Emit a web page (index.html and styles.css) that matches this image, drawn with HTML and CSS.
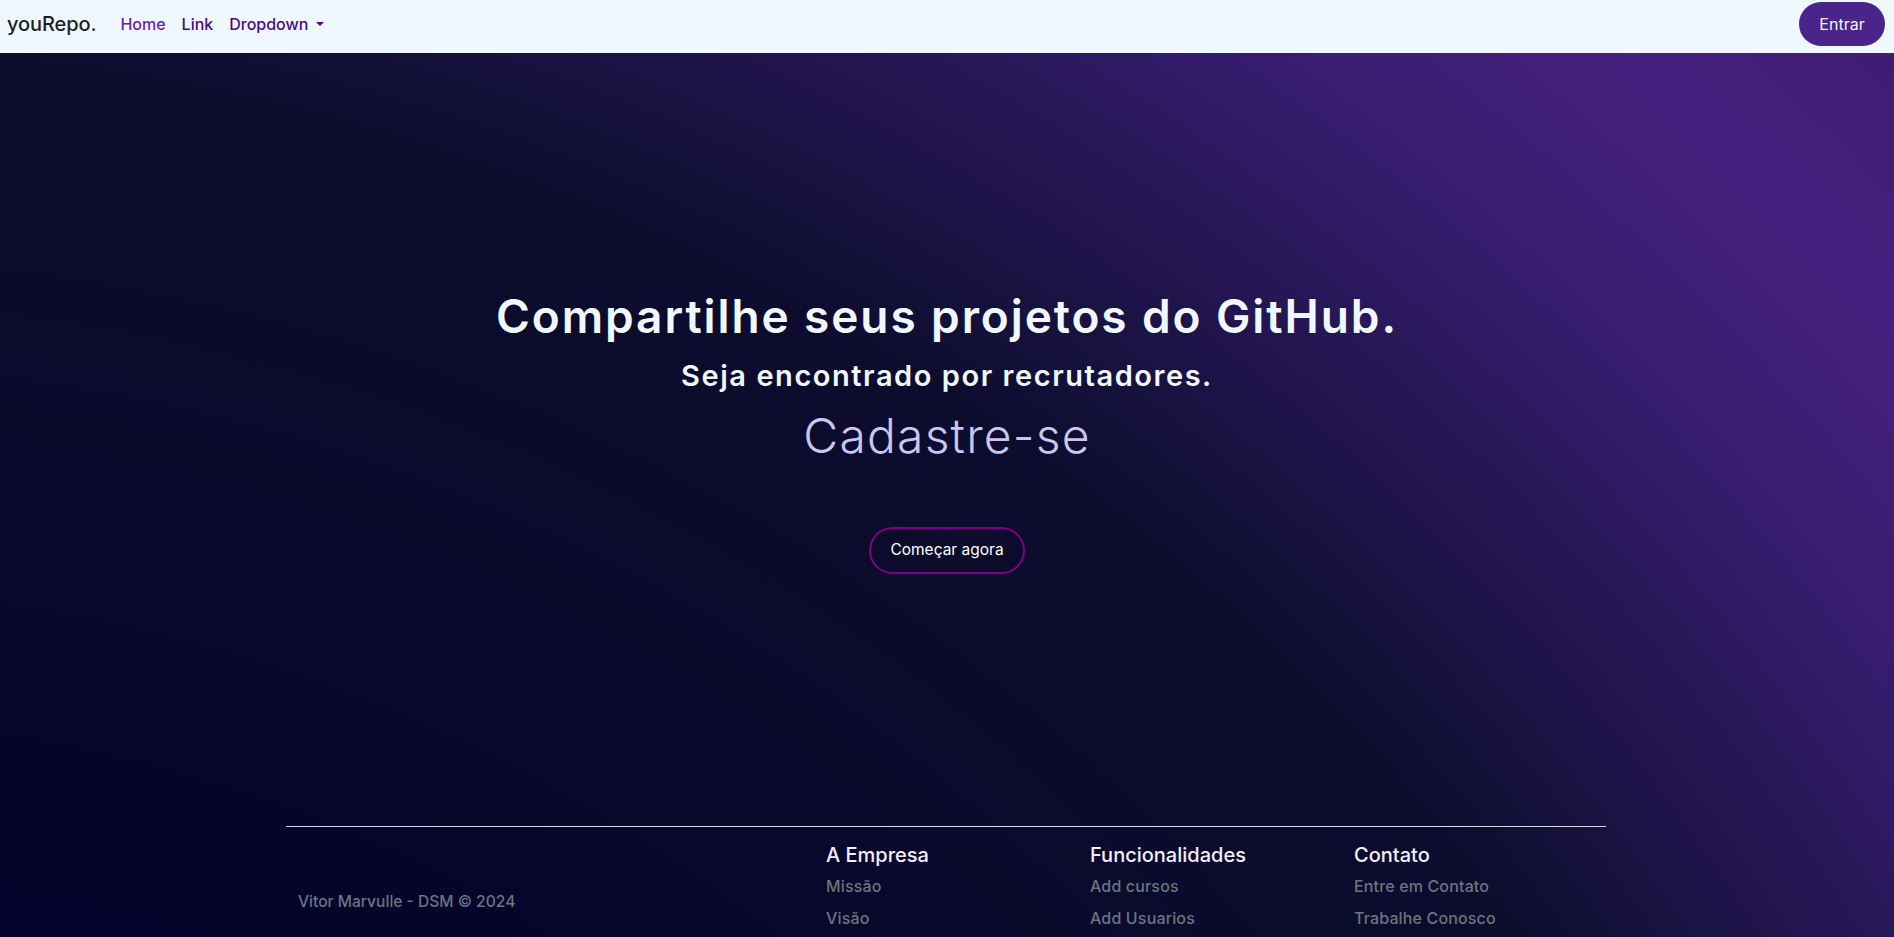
FILE: index.html
```html
<!DOCTYPE html>
<html lang="pt-BR">
<head>
<meta charset="utf-8">
<title>youRepo.</title>
<link rel="stylesheet" href="styles.css">
</head>
<body>
<nav class="navbar">
  <div class="nav-left">
    <a class="brand" href="#">youRepo.</a>
    <ul class="nav-links">
      <li><a class="nav-link active" href="#">Home</a></li>
      <li><a class="nav-link" href="#">Link</a></li>
      <li><a class="nav-link dropdown" href="#">Dropdown<span class="caret"></span></a></li>
    </ul>
  </div>
  <button class="btn-enter" type="button">Entrar</button>
</nav>
<main class="page">
  <section class="hero">
    <h1 class="hero-title">Compartilhe seus projetos do GitHub.</h1>
    <h3 class="hero-sub">Seja encontrado por recrutadores.</h3>
    <p class="hero-cta">Cadastre-se</p>
    <a class="btn-start" href="#">Começar agora</a>
  </section>
  <footer class="footer">
    <div class="footer-col">
      <div class="footer-logo"></div>
      <p class="copyright">Vitor Marvulle - DSM © 2024</p>
    </div>
    <div class="footer-col"></div>
    <div class="footer-col">
      <h5 class="footer-title">A Empresa</h5>
      <ul class="footer-links">
        <li><a href="#">Missão</a></li>
        <li><a href="#">Visão</a></li>
      </ul>
    </div>
    <div class="footer-col">
      <h5 class="footer-title">Funcionalidades</h5>
      <ul class="footer-links">
        <li><a href="#">Add cursos</a></li>
        <li><a href="#">Add Usuarios</a></li>
      </ul>
    </div>
    <div class="footer-col">
      <h5 class="footer-title">Contato</h5>
      <ul class="footer-links">
        <li><a href="#">Entre em Contato</a></li>
        <li><a href="#">Trabalhe Conosco</a></li>
      </ul>
    </div>
  </footer>
</main>
</body>
</html>
```
FILE: styles.css
```css
* { box-sizing: border-box; }

html, body {
  margin: 0;
  padding: 0;
}

body {
  font-family: "Inter", "Open Sans", sans-serif;
  font-size: 16px;
  line-height: 1.5;
  color: #212529;
  background: #03022a;
  overflow: hidden;
  height: 937px;
}

a { text-decoration: none; }

/* ---------- navbar ---------- */
.navbar {
  height: 53px;
  background: #eff7ff;
  display: flex;
  align-items: center;
  justify-content: space-between;
  padding: 0 9px 5px 7px;
}

.nav-left {
  display: flex;
  align-items: center;
}

.brand {
  font-size: 20px;
  font-weight: 500;
  color: #1c1f22;
  margin-right: 16px;
  line-height: 1.5;
  letter-spacing: -0.1px;
}

.nav-links {
  list-style: none;
  margin: 0;
  padding: 0;
  display: flex;
}

.nav-link {
  display: flex;
  align-items: center;
  padding: 8px 8px;
  font-size: 16px;
  font-weight: 500;
  color: #4b0a82;
}

.nav-link.active { color: #6c1bb2; }

.caret {
  display: inline-block;
  margin-left: 8px;
  width: 0;
  height: 0;
  border-top: 4px solid #4b0a82;
  border-left: 4px solid transparent;
  border-right: 4px solid transparent;
}

.btn-enter {
  height: 44px;
  width: 86px;
  border: 0;
  border-radius: 22px;
  background: #4a2489;
  color: #f4f4ff;
  font-family: inherit;
  font-size: 16px;
  font-weight: 400;
  padding: 0;
}

/* ---------- page ---------- */
.page {
  height: 884px;
  background: radial-gradient(circle 3200px at -228px 2161px,
    #03022a 0px,
    #03022a 1297px,
    #0a0b2d 1873px,
    #0b0b2c 2000px,
    #0d0c2e 2166px,
    #15113c 2265px,
    #241551 2409px,
    #281859 2480px,
    #301a66 2549px,
    #3b1d72 2666px,
    #45207f 2851px,
    #3f1c74 3024px,
    #3a1a6e 3200px);
}

.hero {
  display: flex;
  flex-direction: column;
  align-items: center;
  text-align: center;
  padding: 236px 0 0;
  height: 773px;
}

.hero-title {
  margin: 0;
  font-size: 46px;
  line-height: 1.2;
  font-weight: 600;
  color: #f0f8ff;
  letter-spacing: 1.9px;
}

.hero-sub {
  margin: 15px 0 0;
  font-size: 29px;
  line-height: 1.2;
  font-weight: 600;
  color: #f0f8ff;
  letter-spacing: 1.55px;
}

.hero-cta {
  margin: 13px 0 0;
  font-size: 48px;
  line-height: 1.2;
  font-weight: 300;
  color: #cac6f0;
  letter-spacing: 1.2px;
}

.btn-start {
  margin-top: 62px;
  display: inline-block;
  border: 2px solid #800080;
  border-radius: 24px;
  padding: 9.5px 0;
  width: 156px;
  height: 47px;
  font-size: 15.5px;
  line-height: 24px;
  color: #ffffff;
  text-align: center;
}

/* ---------- footer ---------- */
.footer {
  width: 1320px;
  margin: 0 auto;
  border-top: 1px solid #d9dbe2;
  display: grid;
  grid-template-columns: repeat(5, 1fr);
  padding-top: 16px;
  transform: translateX(-1px);
}

.footer-col {
  padding: 0 12px;
}

.footer-logo {
  height: 32px;
  margin-bottom: 15px;
}

.copyright {
  margin: 0;
  font-size: 15.6px;
  line-height: 24px;
  font-weight: 500;
  color: #6b7480;
}

.footer-title {
  margin: 0 0 7px;
  font-size: 20px;
  line-height: 24px;
  font-weight: 500;
  color: #f4ecff;
}

.footer-links {
  list-style: none;
  margin: 0;
  padding: 0;
}

.footer-links li {
  margin-bottom: 8px;
  line-height: 24px;
}

.footer-links a {
  font-size: 16px;
  font-weight: 500;
  color: #6c757d;
  letter-spacing: 0.15px;
}
```
